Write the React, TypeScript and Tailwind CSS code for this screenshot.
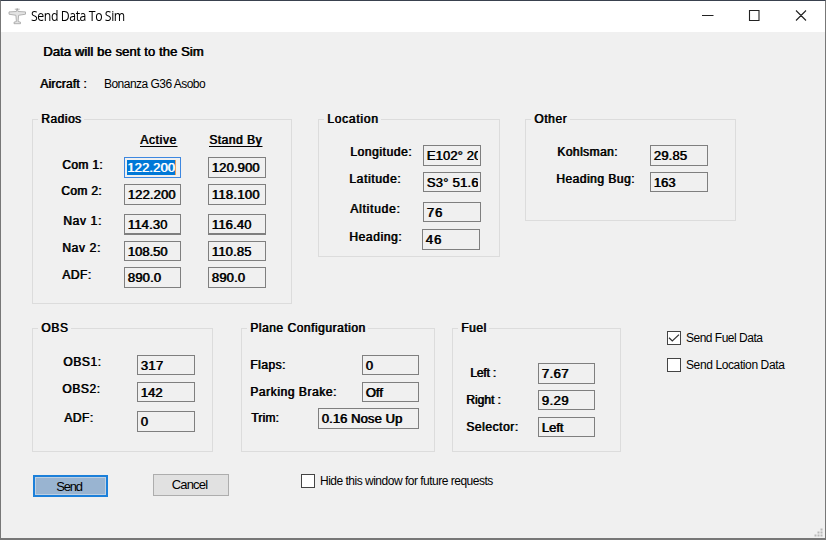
import { useLayoutEffect, useRef } from 'react';
import type { ReactNode } from 'react';

/** Text whose letter spacing is adjusted so that it fills the given width. */
function Fit({ text, w, className = '' }: { text: string; w: number; className?: string }) {
  const ref = useRef<HTMLSpanElement>(null);
  useLayoutEffect(() => {
    const el = ref.current;
    if (!el) return;
    el.style.letterSpacing = '0px';
    const natural = el.offsetWidth;
    el.style.letterSpacing = `${(w - natural) / text.length}px`;
  }, [text, w]);
  return (
    <span ref={ref} className={`inline-block whitespace-pre ${className}`}>
      {text}
    </span>
  );
}

const heavy = '[text-shadow:0.7px_0_0_currentColor]';

function Group({ title, w, className, children }: { title: string; w: number; className: string; children: ReactNode }) {
  return (
    <section className={`shrink-0 border border-[#dcdcdc] ${className}`}>
      <h2 className="-mt-[9px] ml-[5px] h-4 w-fit bg-[#f0f0f0] px-[3px] text-[12px] leading-4">
        <Fit text={title} w={w} className={heavy} />
      </h2>
      {children}
    </section>
  );
}

function Field({ value, w, className = 'w-[58px] h-[21px]' }: { value: string; w: number; className?: string }) {
  return (
    <div className={`shrink-0 border border-[#7f7f7f] px-[2px] pt-[2px] ${className}`}>
      <div className="h-4 overflow-hidden pl-[0.5px] text-[13px] leading-4">
        <Fit text={value} w={w} className={heavy} />
      </div>
    </div>
  );
}

function Row({ label, w, labelClass, className, children }: { label: string; w: number; labelClass: string; className: string; children: ReactNode }) {
  return (
    <div className={`flex items-start ${className}`}>
      <div className={`h-4 shrink-0 text-[12px] leading-4 ${labelClass}`}>
        <Fit text={label} w={w} className={heavy} />
      </div>
      {children}
    </div>
  );
}

function Check({ label, w, checked = false, className = '' }: { label: string; w: number; checked?: boolean; className?: string }) {
  return (
    <div className={`flex h-[14px] items-center ${className}`}>
      <span className="flex size-[14px] items-center justify-center border border-[#444] bg-white">
        {checked && (
          <svg width="12" height="12" viewBox="0 0 12 12" fill="none" stroke="#333" strokeWidth="1.3">
            <path d="M1 5.8 4.3 8.9 11 2.6" />
          </svg>
        )}
      </span>
      <span className="ml-[5px] text-[12px] leading-4">
        <Fit text={label} w={w} />
      </span>
    </div>
  );
}

export default function App() {
  return (
    <div className="flex h-[540px] w-[826px] flex-col overflow-hidden border-x border-t border-b-2 border-[#777] border-t-[#39414e] bg-[#f0f0f0] font-['Liberation_Sans',Arial,sans-serif] text-black">
      <header className="flex h-[31px] shrink-0 items-center bg-white">
        <svg className="-mt-px ml-[7px] shrink-0" width="19" height="19" viewBox="0 0 19 19" fill="#e4e4e4" stroke="#a2a2a2" strokeWidth="0.8">
          <path d="M8.3 4.5 9.2 1.5 10.1 4.5 17.5 4.9V7.2L10.6 8.3 10.1 14.5 12.5 15.2V16.7H6V15.2L8.4 14.5 7.9 8.3 1 7.2V4.9Z" />
          <path d="M6.8 2.2H11.7" />
        </svg>
        <div className="-mt-px ml-[4px] w-[100px] shrink-0 font-['Open_Sans',sans-serif] text-[14px] leading-5">
          <span className="inline-block origin-left scale-x-[0.88]">
            <Fit text="Send Data To Sim" w={107} />
          </span>
        </div>
        <div className="ml-auto flex items-center">
          <svg className="mr-[4px] -mt-[3px]" width="120" height="20" viewBox="0 0 120 20" fill="none" stroke="#222" strokeWidth="1.1">
            <path d="M1 10.5H12.5M48.5 5.5H58V15.5H48.5ZM95 5.5 105 15.5M105 5.5 95 15.5" />
          </svg>
        </div>
      </header>

      <main className="flex flex-col">
        <p className="mt-[12px] ml-[42px] h-4 text-[13px] leading-4">
          <Fit text="Data will be sent to the Sim" w={161} className={heavy} />
        </p>
        <div className="mt-[16px] ml-[39px] flex h-4 text-[12px] leading-4">
          <div className="w-[64px]">
            <Fit text="Aircraft :" w={47} className={heavy} />
          </div>
          <Fit text="Bonanza G36 Asobo" w={101} />
        </div>

        <div className="mt-[27px] ml-[31px] flex items-start">
          <Group title="Radios" w={40} className="h-[185px] w-[260px]">
            <div className="mt-[5px] flex h-4 text-[12px] leading-4">
              <div className="ml-[107px] w-[69px]">
                <Fit text="Active" w={37} className={`underline underline-offset-2 ${heavy}`} />
              </div>
              <Fit text="Stand By" w={53} className={`underline underline-offset-2 ${heavy}`} />
            </div>
            <Row label="Com 1:" w={41} labelClass="ml-[29px] w-[62px]" className="mt-[9px] h-[27px]">
              <div className="h-[21px] w-[57px] shrink-0 border border-[#3d87e0] px-[2px] pt-px">
                <div className="mt-px flex h-[15px] w-[49px] border-r border-[#e8a060] bg-[#0078d7] text-[13px] leading-4 text-white">
                  <Fit text="122.200" w={48} className={heavy} />
                </div>
              </div>
              <div className="ml-[27px]"><Field value="120.900" w={48} /></div>
            </Row>
            <Row label="Com 2:" w={41} labelClass="-mt-px ml-[28px] w-[63px]" className="h-[30px]">
              <Field value="122.200" w={48} className="h-[21px] w-[57px]" />
              <div className="ml-[27px]"><Field value="118.100" w={48} /></div>
            </Row>
            <Row label="Nav 1:" w={39} labelClass="-mt-px ml-[30px] w-[61px]" className="h-[27px]">
              <Field value="114.30" w={40} className="h-[21px] w-[57px] border-b-2" />
              <div className="ml-[27px]"><Field value="116.40" w={40} className="h-[21px] w-[58px] border-b-2" /></div>
            </Row>
            <Row label="Nav 2:" w={39} labelClass="-mt-px ml-[29px] w-[62px]" className="h-[26px]">
              <Field value="108.50" w={40} className="h-[20px] w-[57px]" />
              <div className="ml-[27px]"><Field value="110.85" w={40} className="h-[20px] w-[58px]" /></div>
            </Row>
            <Row label="ADF:" w={29} labelClass="ml-[29px] w-[62px]" className="h-[21px]">
              <Field value="890.0" w={34} className="h-[21px] w-[57px]" />
              <div className="ml-[27px]"><Field value="890.0" w={34} /></div>
            </Row>
          </Group>

          <Group title="Location" w={51} className="ml-[26px] h-[138px] w-[182px]">
            <Row label="Longitude:" w={62} labelClass="-mt-px ml-[31px] w-[73px]" className="mt-[18px] h-[27px]">
              <Field value="E102° 20" w={55} />
            </Row>
            <Row label="Latitude:" w={52} labelClass="-mt-px ml-[30px] w-[74px]" className="h-[30px]">
              <Field value="S3° 51.6" w={52} className="h-[20px] w-[58px]" />
            </Row>
            <Row label="Altitude:" w={50} labelClass="-mt-px ml-[31px] w-[73px]" className="h-[27px]">
              <Field value="76" w={16} className="h-[20px] w-[58px]" />
            </Row>
            <Row label="Heading:" w={53} labelClass="ml-[30px] w-[73px]" className="h-[21px]">
              <Field value="46" w={16} />
            </Row>
          </Group>

          <Group title="Other" w={33} className="ml-[25px] h-[102px] w-[211px]">
            <Row label="Kohlsman:" w={61} labelClass="-mt-px ml-[31px] w-[93px]" className="mt-[18px] h-[27px]">
              <Field value="29.85" w={34} />
            </Row>
            <Row label="Heading Bug:" w={79} labelClass="-mt-px ml-[30px] w-[94px]" className="h-[21px]">
              <Field value="163" w={22} className="h-[20px] w-[58px]" />
            </Row>
          </Group>
        </div>

        <div className="mt-[24px] ml-[31px] flex items-start">
          <Group title="OBS" w={27} className="h-[124px] w-[181px]">
            <Row label="OBS1:" w={38} labelClass="-mt-px ml-[30px] w-[74px]" className="mt-[19px] h-[27px]">
              <Field value="317" w={23} className="h-[20px] w-[58px]" />
            </Row>
            <Row label="OBS2:" w={38} labelClass="-mt-px ml-[29px] w-[75px]" className="h-[29px]">
              <Field value="142" w={22} className="h-[20px] w-[58px]" />
            </Row>
            <Row label="ADF:" w={29} labelClass="-mt-px ml-[31px] w-[73px]" className="h-[21px]">
              <Field value="0" w={8} />
            </Row>
          </Group>

          <Group title="Plane Configuration" w={115} className="ml-[28px] h-[124px] w-[194px]">
            <Row label="Flaps:" w={36} labelClass="mt-[2px] ml-[8px] w-[112px]" className="mt-[19px] h-[27px]">
              <Field value="0" w={8} className="h-[20px] w-[57px]" />
            </Row>
            <Row label="Parking Brake:" w={87} labelClass="mt-[2px] ml-[8px] w-[112px]" className="h-[26px]">
              <Field value="Off" w={17} className="h-[20px] w-[57px]" />
            </Row>
            <Row label="Trim:" w={28} labelClass="mt-[2px] ml-[9px] w-[67px]" className="h-[21px]">
              <Field value="0.16 Nose Up" w={81} className="h-[21px] w-[101px]" />
            </Row>
          </Group>

          <Group title="Fuel" w={25} className="ml-[17px] h-[124px] w-[169px]">
            <Row label="Left :" w={26} labelClass="mt-[2px] ml-[17px] w-[68px]" className="mt-[27px] h-[27px]">
              <Field value="7.67" w={27} className="h-[21px] w-[57px]" />
            </Row>
            <Row label="Right :" w={35} labelClass="mt-[2px] ml-[13px] w-[72px]" className="h-[27px]">
              <Field value="9.29" w={27} className="h-[20px] w-[57px]" />
            </Row>
            <Row label="Selector:" w={52} labelClass="mt-[2px] ml-[13px] w-[72px]" className="h-[21px]">
              <Field value="Left" w={22} className="h-[20px] w-[57px]" />
            </Row>
          </Group>

          <div className="mt-[3px] ml-[46px] flex flex-col gap-[13px]">
            <Check label="Send Fuel Data" w={76} checked />
            <Check label="Send Location Data" w={98} />
          </div>
        </div>

        <div className="mt-[22px] ml-[32px] flex items-start">
          <button className="mt-px h-[22px] w-[75px] border-2 border-[#1c80da] bg-[#99b4d1] pr-[3px] text-[13px] leading-5 shadow-[inset_0_0_0_1px_#bfd0e2]">
            <Fit text="Send" w={25} />
          </button>
          <button className="ml-[45px] h-[22px] w-[76px] border border-[#adadad] bg-[#e1e1e1] pr-[3px] text-[13px] leading-5">
            <Fit text="Cancel" w={35} />
          </button>
          <Check label="Hide this window for future requests" w={173} className="ml-[72px]" />
        </div>
      </main>

      <svg className="mt-auto mr-[2px] mb-[1px] self-end" width="9" height="9" viewBox="0 0 9 9" fill="#b8b8b8">
        <path d="M6.5 0.5h2v2h-2zM3.5 3.5h2v2h-2zM6.5 3.5h2v2h-2zM.5 6.5h2v2h-2zM3.5 6.5h2v2h-2zM6.5 6.5h2v2h-2z" />
      </svg>
    </div>
  );
}
